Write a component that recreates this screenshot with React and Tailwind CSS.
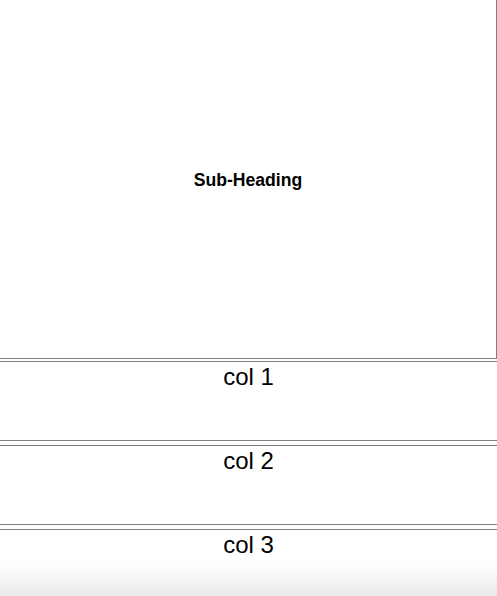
const ROWS = ['col 1', 'col 2', 'col 3'];

export default function App() {
  return (
    <div
      className="flex h-[596px] flex-col overflow-hidden bg-white text-black"
      style={{ fontFamily: '"Liberation Sans", Arial, sans-serif' }}
    >
      {/* header box */}
      <div className="flex h-[359px] shrink-0 items-center justify-center border-r border-b border-[#808080] pt-[3px]">
        <h3 className="text-[17.6px] font-bold leading-none">Sub-Heading</h3>
      </div>

      {/* rows */}
      <div className="mt-[2px] flex flex-1 flex-col gap-[4px]">
        {ROWS.map((label, i) => {
          const last = i === ROWS.length - 1;
          return (
            <div
              key={label}
              className={
                last
                  ? 'flex-1 border-t border-[#808080] bg-gradient-to-b from-white from-[52%] to-[#e9e9e9] pt-[5px] text-center text-[24px] leading-[20px]'
                  : 'h-[80px] border-t border-b border-[#808080] pt-[5px] text-center text-[24px] leading-[20px]'
              }
            >
              {label}
            </div>
          );
        })}
      </div>
    </div>
  );
}
